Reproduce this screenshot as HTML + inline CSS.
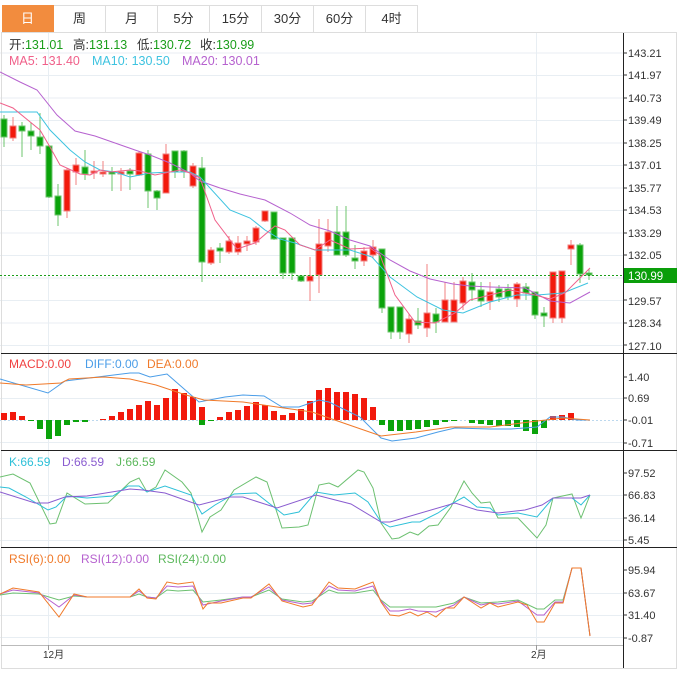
<!DOCTYPE html>
<html><head><meta charset="utf-8"><style>
body{margin:0;background:#fff;width:678px;height:673px;overflow:hidden;font-family:"Liberation Sans","Noto Sans CJK SC",sans-serif}
.tabs{position:absolute;left:2px;top:5px;height:27px;display:flex}
.tabs div{width:51px;height:26px;border:1px solid #ddd;border-left:none;text-align:center;line-height:26px;font-size:13px;color:#333}
.tabs div:first-child{background:#f28c3e;color:#fff;border-color:#f28c3e}
svg{position:absolute;left:0;top:0}
</style></head><body>
<div class="tabs"><div>日</div><div>周</div><div>月</div><div>5分</div><div>15分</div><div>30分</div><div>60分</div><div>4时</div></div>
<svg width="678" height="673" font-family="Liberation Sans, Noto Sans CJK SC, sans-serif">
<g stroke="#e8eef3" stroke-width="1">
<line x1="0" y1="53" x2="623" y2="53"/><line x1="0" y1="75.5" x2="623" y2="75.5"/><line x1="0" y1="98" x2="623" y2="98"/><line x1="0" y1="120.5" x2="623" y2="120.5"/><line x1="0" y1="143" x2="623" y2="143"/><line x1="0" y1="165.5" x2="623" y2="165.5"/><line x1="0" y1="188" x2="623" y2="188"/><line x1="0" y1="210.5" x2="623" y2="210.5"/><line x1="0" y1="233" x2="623" y2="233"/><line x1="0" y1="255.5" x2="623" y2="255.5"/><line x1="0" y1="278" x2="623" y2="278"/><line x1="0" y1="300.5" x2="623" y2="300.5"/><line x1="0" y1="323" x2="623" y2="323"/><line x1="0" y1="345.5" x2="623" y2="345.5"/>
<line x1="0" y1="398.5" x2="623" y2="398.5"/><line x1="0" y1="442.5" x2="623" y2="442.5"/>
<line x1="0" y1="495.5" x2="623" y2="495.5"/><line x1="0" y1="518.5" x2="623" y2="518.5"/><line x1="0" y1="540.5" x2="623" y2="540.5"/>
<line x1="0" y1="593.5" x2="623" y2="593.5"/><line x1="0" y1="615.5" x2="623" y2="615.5"/><line x1="0" y1="637.5" x2="623" y2="637.5"/>
<line x1="48.5" y1="33" x2="48.5" y2="645"/><line x1="536.5" y1="33" x2="536.5" y2="645"/>
</g>
<line x1="0" y1="420.5" x2="623" y2="420.5" stroke="#bcd8ee" stroke-dasharray="2,2"/>
<rect x="1.5" y="32.5" width="675" height="636" fill="none" stroke="#ddd"/>
<line x1="623.5" y1="33" x2="623.5" y2="668" stroke="#222"/>
<g stroke="#222"><line x1="1" y1="353.5" x2="677" y2="353.5"/><line x1="1" y1="450.5" x2="677" y2="450.5"/><line x1="1" y1="547.5" x2="677" y2="547.5"/></g>
<line x1="1" y1="645.5" x2="623" y2="645.5" stroke="#bbb"/>
<g stroke="#999"><line x1="48.5" y1="645" x2="48.5" y2="650"/><line x1="536.5" y1="645" x2="536.5" y2="650"/></g>
<g font-size="10" fill="#333"><text x="43" y="658">12月</text><text x="531" y="658">2月</text></g>
<g font-size="11" fill="#333">
<text x="628" y="57">143.21</text><text x="628" y="79">141.97</text><text x="628" y="102">140.73</text><text x="628" y="124">139.49</text><text x="628" y="147">138.25</text><text x="628" y="169">137.01</text><text x="628" y="192">135.77</text><text x="628" y="214">134.53</text><text x="628" y="237">133.29</text><text x="628" y="259">132.05</text><text x="628" y="305">129.57</text><text x="628" y="327">128.34</text><text x="628" y="350">127.10</text>
<text x="628" y="381">1.40</text><text x="628" y="402">0.69</text><text x="628" y="424">-0.01</text><text x="628" y="447">-0.71</text>
<text x="628" y="477">97.52</text><text x="628" y="499">66.83</text><text x="628" y="522">36.14</text><text x="628" y="544">5.45</text>
<text x="628" y="574">95.94</text><text x="628" y="597">63.67</text><text x="628" y="619">31.40</text><text x="628" y="642">-0.87</text>
</g>
<g stroke="#333"><line x1="623" y1="53" x2="627" y2="53"/><line x1="623" y1="75" x2="627" y2="75"/><line x1="623" y1="98" x2="627" y2="98"/><line x1="623" y1="120" x2="627" y2="120"/><line x1="623" y1="143" x2="627" y2="143"/><line x1="623" y1="165" x2="627" y2="165"/><line x1="623" y1="188" x2="627" y2="188"/><line x1="623" y1="210" x2="627" y2="210"/><line x1="623" y1="233" x2="627" y2="233"/><line x1="623" y1="255" x2="627" y2="255"/><line x1="623" y1="300" x2="627" y2="300"/><line x1="623" y1="323" x2="627" y2="323"/><line x1="623" y1="345" x2="627" y2="345"/>
<line x1="623" y1="377" x2="627" y2="377"/><line x1="623" y1="398" x2="627" y2="398"/><line x1="623" y1="420" x2="627" y2="420"/><line x1="623" y1="443" x2="627" y2="443"/>
<line x1="623" y1="473" x2="627" y2="473"/><line x1="623" y1="495" x2="627" y2="495"/><line x1="623" y1="518" x2="627" y2="518"/><line x1="623" y1="540" x2="627" y2="540"/>
<line x1="623" y1="570" x2="627" y2="570"/><line x1="623" y1="593" x2="627" y2="593"/><line x1="623" y1="615" x2="627" y2="615"/><line x1="623" y1="638" x2="627" y2="638"/></g>
<g font-size="12.5" fill="#333">
<text x="9" y="49">开:<tspan fill="#1a9e1a">131.01</tspan></text>
<text x="73" y="49">高:<tspan fill="#1a9e1a">131.13</tspan></text>
<text x="137" y="49">低:<tspan fill="#1a9e1a">130.72</tspan></text>
<text x="200" y="49">收:<tspan fill="#1a9e1a">130.99</tspan></text>
<text x="9" y="65" fill="#f0608a">MA5: 131.40</text>
<text x="92" y="65" fill="#3ec3e0">MA10: 130.50</text>
<text x="182" y="65" fill="#b662cf">MA20: 130.01</text>
</g>
<g font-size="12">
<text x="9" y="368" fill="#f04040">MACD:0.00</text><text x="85" y="368" fill="#4a9de8">DIFF:0.00</text><text x="147" y="368" fill="#f07a2a">DEA:0.00</text>
<text x="9" y="466" fill="#2ec0d8">K:66.59</text><text x="62" y="466" fill="#8a5cd0">D:66.59</text><text x="116" y="466" fill="#5cb85c">J:66.59</text>
<text x="9" y="563" fill="#f07a2a">RSI(6):0.00</text><text x="81" y="563" fill="#b662cf">RSI(12):0.00</text><text x="158" y="563" fill="#5cb85c">RSI(24):0.00</text>
</g>
<g stroke-width="1">
<g stroke="#6cc46c" fill="#0ba30b">
<line x1="4" y1="115" x2="4" y2="147"/><rect x="1" y="119" width="6" height="18"/>
<line x1="22" y1="122" x2="22" y2="157"/><rect x="19" y="126" width="6" height="5"/>
<line x1="31" y1="123" x2="31" y2="150"/><rect x="28" y="131" width="6" height="5"/>
<line x1="40" y1="113" x2="40" y2="154"/><rect x="37" y="137" width="6" height="9"/>
<line x1="49" y1="146" x2="49" y2="198"/><rect x="46" y="146" width="6" height="51"/>
<line x1="58" y1="184" x2="58" y2="226"/><rect x="55" y="196" width="6" height="19"/>
<line x1="85" y1="150" x2="85" y2="180"/><rect x="82" y="167" width="6" height="7"/>
<line x1="112" y1="167" x2="112" y2="191"/><rect x="109" y="172" width="6" height="2"/>
<line x1="130" y1="168" x2="130" y2="190"/><rect x="127" y="171" width="6" height="3"/>
<line x1="148" y1="150" x2="148" y2="208"/><rect x="145" y="154" width="6" height="37"/>
<line x1="157" y1="190" x2="157" y2="210"/><rect x="154" y="191" width="6" height="7"/>
<line x1="175" y1="151" x2="175" y2="178"/><rect x="172" y="151" width="6" height="21"/>
<line x1="184" y1="150" x2="184" y2="178"/><rect x="181" y="151" width="6" height="20"/>
<line x1="202" y1="157" x2="202" y2="282"/><rect x="199" y="168" width="6" height="94"/>
<line x1="220" y1="243" x2="220" y2="263"/><rect x="217" y="248" width="6" height="3"/>
<line x1="274" y1="212" x2="274" y2="240"/><rect x="271" y="212" width="6" height="27"/>
<line x1="283" y1="238" x2="283" y2="279"/><rect x="280" y="238" width="6" height="35"/>
<line x1="292" y1="238" x2="292" y2="280"/><rect x="289" y="238" width="6" height="35"/>
<line x1="301" y1="276" x2="301" y2="282"/><rect x="298" y="276" width="6" height="5"/>
<line x1="337" y1="206" x2="337" y2="255"/><rect x="334" y="232" width="6" height="23"/>
<line x1="346" y1="206" x2="346" y2="257"/><rect x="343" y="232" width="6" height="23"/>
<line x1="355" y1="245" x2="355" y2="269"/><rect x="352" y="258" width="6" height="3"/>
<line x1="382" y1="249" x2="382" y2="313"/><rect x="379" y="249" width="6" height="59"/>
<line x1="391" y1="307" x2="391" y2="339"/><rect x="388" y="307" width="6" height="25"/>
<line x1="400" y1="307" x2="400" y2="339"/><rect x="397" y="307" width="6" height="25"/>
<line x1="418" y1="308" x2="418" y2="329"/><rect x="415" y="321" width="6" height="4"/>
<line x1="436" y1="308" x2="436" y2="333"/><rect x="433" y="314" width="6" height="8"/>
<line x1="472" y1="273" x2="472" y2="301"/><rect x="469" y="282" width="6" height="8"/>
<line x1="481" y1="282" x2="481" y2="307"/><rect x="478" y="290" width="6" height="11"/>
<line x1="499" y1="285" x2="499" y2="302"/><rect x="496" y="289" width="6" height="8"/>
<line x1="508" y1="284" x2="508" y2="300"/><rect x="505" y="289" width="6" height="8"/>
<line x1="526" y1="283" x2="526" y2="300"/><rect x="523" y="287" width="6" height="6"/>
<line x1="535" y1="292" x2="535" y2="319"/><rect x="532" y="292" width="6" height="23"/>
<line x1="544" y1="307" x2="544" y2="327"/><rect x="541" y="313" width="6" height="3"/>
<line x1="580" y1="243" x2="580" y2="283"/><rect x="577" y="245" width="6" height="29"/>
<line x1="589" y1="269" x2="589" y2="280"/><rect x="586" y="273" width="6" height="2"/>
</g>
<g stroke="#f08080" fill="#f2190c">
<line x1="13" y1="117" x2="13" y2="141"/><rect x="10" y="126" width="6" height="12"/>
<line x1="67" y1="168" x2="67" y2="218"/><rect x="64" y="170" width="6" height="41"/>
<line x1="76" y1="158" x2="76" y2="185"/><rect x="73" y="165" width="6" height="7"/>
<line x1="94" y1="161" x2="94" y2="179"/><rect x="91" y="171" width="6" height="2"/>
<line x1="103" y1="161" x2="103" y2="177"/><rect x="100" y="172" width="6" height="2"/>
<line x1="121" y1="168" x2="121" y2="191"/><rect x="118" y="172" width="6" height="2"/>
<line x1="139" y1="151" x2="139" y2="176"/><rect x="136" y="153" width="6" height="22"/>
<line x1="166" y1="144" x2="166" y2="193"/><rect x="163" y="154" width="6" height="39"/>
<line x1="193" y1="163" x2="193" y2="188"/><rect x="190" y="166" width="6" height="20"/>
<line x1="211" y1="247" x2="211" y2="265"/><rect x="208" y="250" width="6" height="13"/>
<line x1="229" y1="236" x2="229" y2="254"/><rect x="226" y="241" width="6" height="11"/>
<line x1="238" y1="236" x2="238" y2="255"/><rect x="235" y="243" width="6" height="9"/>
<line x1="247" y1="236" x2="247" y2="251"/><rect x="244" y="241" width="6" height="3"/>
<line x1="256" y1="226" x2="256" y2="245"/><rect x="253" y="228" width="6" height="14"/>
<line x1="265" y1="211" x2="265" y2="222"/><rect x="262" y="211" width="6" height="10"/>
<line x1="310" y1="257" x2="310" y2="301"/><rect x="307" y="276" width="6" height="5"/>
<line x1="319" y1="219" x2="319" y2="293"/><rect x="316" y="244" width="6" height="31"/>
<line x1="328" y1="219" x2="328" y2="252"/><rect x="325" y="232" width="6" height="14"/>
<line x1="364" y1="247" x2="364" y2="266"/><rect x="361" y="251" width="6" height="10"/>
<line x1="373" y1="240" x2="373" y2="258"/><rect x="370" y="247" width="6" height="8"/>
<line x1="409" y1="314" x2="409" y2="343"/><rect x="406" y="319" width="6" height="15"/>
<line x1="427" y1="264" x2="427" y2="337"/><rect x="424" y="313" width="6" height="15"/>
<line x1="445" y1="282" x2="445" y2="322"/><rect x="442" y="300" width="6" height="22"/>
<line x1="454" y1="282" x2="454" y2="322"/><rect x="451" y="300" width="6" height="22"/>
<line x1="463" y1="277" x2="463" y2="310"/><rect x="460" y="281" width="6" height="22"/>
<line x1="490" y1="282" x2="490" y2="310"/><rect x="487" y="292" width="6" height="9"/>
<line x1="517" y1="282" x2="517" y2="307"/><rect x="514" y="284" width="6" height="15"/>
<line x1="553" y1="272" x2="553" y2="323"/><rect x="550" y="272" width="6" height="46"/>
<line x1="562" y1="271" x2="562" y2="323"/><rect x="559" y="271" width="6" height="47"/>
<line x1="571" y1="240" x2="571" y2="265"/><rect x="568" y="245" width="6" height="4"/>
</g>
</g>
<line x1="0" y1="275.5" x2="623" y2="275.5" stroke="#1a9e1a" stroke-dasharray="2,2"/>
<g fill="none" stroke-width="1">
<polyline stroke="#b662cf" points="0,72 20,82 37,90 57,115 75,131 95,136 115,143 135,150 150,155 170,163 190,173 200,181 220,188 240,194 265,200 290,213 310,225 330,231 350,240 370,246 390,260 410,271 430,279 453,284 470,286 490,287 525,288 550,301 570,303 590,292"/>
<polyline stroke="#3ec3e0" points="0,112 37,112 50,130 70,150 85,162 100,170 115,172 130,177 150,173 170,172 190,172 200,177 230,210 250,218 265,230 280,239 295,243 315,250 330,250 350,250 372,257 390,277 417,297 443,310 463,313 490,302 517,295 537,295 550,294 563,293 588,283"/>
<polyline stroke="#f0608a" points="0,103 13,108 40,130 50,147 60,165 80,174 90,175 100,170 110,172 130,170 140,171 155,175 165,173 180,170 190,173 200,178 215,220 237,249 255,243 275,226 285,230 300,245 315,250 330,240 350,249 370,248 380,255 395,295 415,322 435,323 455,313 470,300 490,295 510,290 535,295 550,299 565,293 590,268"/>
</g>
<rect x="624" y="268" width="53" height="15" fill="#0a9e0a"/>
<text x="628" y="280" font-size="11.5" fill="#fff">130.99</text>
<g fill="#f2190c">
<rect x="1" y="413" width="6" height="7"/><rect x="10" y="412" width="6" height="8"/><rect x="19" y="416" width="6" height="4"/>
<rect x="100" y="419" width="6" height="1"/><rect x="109" y="416" width="6" height="4"/><rect x="118" y="412" width="6" height="8"/><rect x="127" y="409" width="6" height="11"/><rect x="136" y="405" width="6" height="15"/><rect x="145" y="401" width="6" height="19"/><rect x="154" y="405" width="6" height="15"/><rect x="163" y="398" width="6" height="22"/><rect x="172" y="389" width="6" height="31"/><rect x="181" y="393" width="6" height="27"/><rect x="190" y="397" width="6" height="23"/><rect x="199" y="407" width="6" height="13"/>
<rect x="217" y="417" width="6" height="3"/><rect x="226" y="412" width="6" height="8"/><rect x="235" y="410" width="6" height="10"/><rect x="244" y="406" width="6" height="14"/><rect x="253" y="402" width="6" height="18"/><rect x="262" y="405" width="6" height="15"/><rect x="271" y="411" width="6" height="9"/><rect x="280" y="415" width="6" height="5"/><rect x="289" y="413" width="6" height="7"/><rect x="298" y="409" width="6" height="11"/><rect x="307" y="401" width="6" height="19"/><rect x="316" y="390" width="6" height="30"/><rect x="325" y="388" width="6" height="32"/><rect x="334" y="392" width="6" height="28"/><rect x="343" y="392" width="6" height="28"/><rect x="352" y="394" width="6" height="26"/><rect x="361" y="398" width="6" height="22"/><rect x="370" y="407" width="6" height="13"/>
<rect x="550" y="416" width="6" height="4"/><rect x="559" y="415" width="6" height="5"/><rect x="568" y="413" width="6" height="7"/>
</g>
<g fill="#0ba30b">
<rect x="28" y="420" width="6" height="1"/><rect x="37" y="420" width="6" height="9"/><rect x="46" y="420" width="6" height="19"/><rect x="55" y="420" width="6" height="16"/><rect x="64" y="420" width="6" height="5"/><rect x="73" y="420" width="6" height="2"/><rect x="82" y="420" width="6" height="2"/>
<rect x="199" y="420" width="6" height="5"/><rect x="208" y="420" width="6" height="1"/>
<rect x="379" y="420" width="6" height="5"/><rect x="388" y="420" width="6" height="11"/><rect x="397" y="420" width="6" height="11"/><rect x="406" y="420" width="6" height="10"/><rect x="415" y="420" width="6" height="9"/><rect x="424" y="420" width="6" height="7"/><rect x="433" y="420" width="6" height="5"/><rect x="442" y="420" width="6" height="2"/><rect x="451" y="420" width="6" height="1"/><rect x="469" y="420" width="6" height="3"/><rect x="478" y="420" width="6" height="4"/><rect x="487" y="420" width="6" height="5"/><rect x="496" y="420" width="6" height="6"/><rect x="505" y="420" width="6" height="6"/><rect x="514" y="420" width="6" height="7"/><rect x="523" y="420" width="6" height="11"/><rect x="532" y="420" width="6" height="14"/><rect x="541" y="420" width="6" height="8"/>
</g>
<g fill="none">
<polyline stroke="#4a9de8" points="0,379 48,393 65,381 130,373 139,373 150,377 167,374 199,402 225,397 243,395 264,396 282,407 299,407 319,400 329,402 360,417 381,438 392,441 416,438 438,432 455,428 490,429 511,429 537,427 550,417 563,417 577,420 590,420"/>
<polyline stroke="#f07a2a" points="0,383 26,385 61,383 69,379 104,377 130,379 156,385 186,395 204,400 243,402 277,407 312,412 329,418 355,427 381,436 416,432 451,427 490,427 537,421 563,418 590,420"/>
<polyline stroke="#6cc070" points="0,477 13,474 30,483 50,524 56,523 67,493 85,504 108,503 130,482 139,478 147,492 156,487 165,470 182,482 191,493 202,532 210,517 221,510 234,490 256,477 267,482 282,528 299,527 308,525 319,485 329,483 338,487 358,470 364,472 373,488 381,523 392,539 399,538 410,532 418,535 429,526 438,525 451,507 464,481 472,493 481,503 490,502 498,518 518,518 537,538 546,525 553,498 572,494 581,518 590,495"/>
<polyline stroke="#2ec0d8" points="0,487 9,488 26,497 48,510 56,507 67,496 87,498 113,496 128,486 139,486 147,492 165,486 191,495 202,514 215,505 234,494 256,493 284,515 299,512 316,492 334,495 355,493 368,502 381,522 390,527 412,522 420,522 438,513 451,504 464,497 477,507 490,508 498,515 518,513 537,517 553,498 572,498 581,505 590,495"/>
<polyline stroke="#8a5cd0" points="0,492 35,503 48,503 65,497 87,496 130,489 143,490 165,493 199,505 230,497 243,497 277,508 316,495 351,504 381,522 390,522 455,503 477,510 498,513 525,510 542,505 553,498 581,498 590,495"/>
<polyline stroke="#6cc070" points="0,595 13,593 39,594 59,600 74,596 87,597 130,597 139,594 147,597 156,598 167,590 178,591 193,590 203,602 221,600 243,597 251,597 269,590 282,599 303,602 312,601 329,590 338,593 355,593 373,590 381,600 390,607 399,607 418,607 436,607 454,603 464,597 481,603 498,602 518,600 537,609 544,609 555,600 563,600 572,568 581,568 590,636"/>
<polyline stroke="#b662cf" points="0,594 13,590 39,593 59,607 74,595 87,597 130,597 139,591 147,597 156,598 167,586 178,587 193,586 203,605 221,601 243,597 251,597 269,587 282,600 303,604 312,603 329,586 338,590 355,591 373,586 381,601 390,611 399,611 410,609 418,611 436,612 454,605 464,597 481,605 490,603 498,604 518,601 537,615 544,615 555,602 563,602 572,568 581,568 590,636"/>
<polyline stroke="#f07a2a" points="0,594 13,588 39,592 59,617 74,594 87,597 130,597 139,589 147,598 156,599 167,582 178,584 193,582 203,609 208,603 221,603 243,598 251,598 269,584 282,601 303,607 312,605 329,582 338,588 355,589 373,582 381,602 390,615 399,616 410,612 418,616 427,612 436,617 446,608 454,608 464,597 481,608 490,603 498,607 518,602 527,605 537,622 544,622 555,603 563,603 572,568 581,568 590,636"/>
</g>
</svg>
</body></html>
